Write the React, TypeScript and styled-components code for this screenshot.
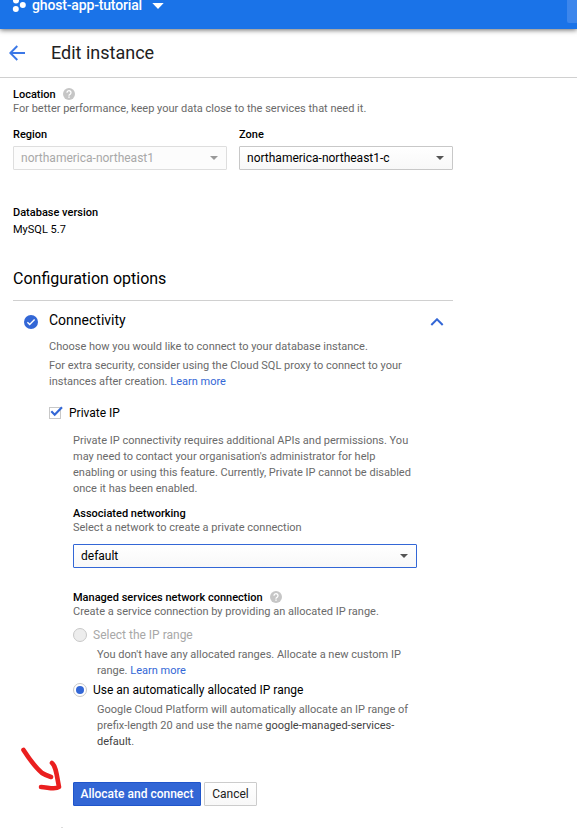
import React from 'react';
import styled, { createGlobalStyle, css } from 'styled-components';

const Global = createGlobalStyle`
  * { box-sizing: border-box; }
  body { margin: 0; background: #fff; font-family: Roboto, sans-serif; overflow: hidden; }
`;

const Page = styled.div`
  position: relative;
  width: 577px;
  height: 828px;
  overflow: hidden;
  background: #fff;
  color: #000;
  font-size: 11px;
  line-height: 16px;
  white-space: nowrap;
`;

const TopBar = styled.header`
  position: relative;
  display: flex;
  align-items: flex-start;
  justify-content: space-between;
  height: 29px;
  padding-left: 12px;
  background: #1a73e8;
  color: #fff;
  box-shadow: 0 1px 5px rgba(0, 0, 0, 0.6);
`;

const Project = styled.div`
  display: flex;
  height: 12px;
  gap: 6px;
  svg { display: block; }
`;

const ProjectName = styled.span`
  width: 114px;
  height: 10px;
  font-size: 14px;
  font-weight: 500;
  letter-spacing: -0.16px;
  line-height: 10px;
`;

const SearchEdge = styled.div`
  width: 10px;
  height: 23px;
  border-radius: 0 0 0 2px;
  background: #3c86ec;
`;

const TitleBar = styled.div`
  display: flex;
  align-items: center;
  gap: 26px;
  height: 49px;
  padding-left: 9px;
  border-bottom: 1px solid #d0d0d0;
`;

const Title = styled.h1`
  margin: 0;
  font-size: 18px;
  font-weight: 400;
  line-height: 24px;
  color: #212121;
`;

const Content = styled.main`
  width: 453px;
  padding: 9px 0 0 13px;
`;

const Line = styled.div<{ $kind?: 'label' | 'muted' | 'plain' }>`
  display: flex;
  align-items: center;
  gap: 7px;
  height: 16px;
  color: ${p => (p.$kind === 'muted' ? '#6a6a6a' : '#000')};
  font-weight: ${p => (p.$kind === 'label' ? 500 : 400)};
  svg { flex: none; margin-bottom: 2px; }
`;

const Text = styled.p<{ $top?: number }>`
  margin: ${p => p.$top ?? 0}px 0 0;
  color: #6a6a6a;
`;

const Link = styled.a`
  color: #3367d6;
`;

const Name = styled.span`
  color: #424242;
`;

const Stack = styled.div<{ $top: number }>`
  margin-top: ${p => p.$top}px;
`;

const Tight = styled.div`
  display: flex;
  flex-direction: column;
  > :last-child { margin-top: -2px; }
`;

const Columns = styled.div`
  display: grid;
  grid-template-columns: 214px 214px;
  gap: 12px;
  margin-top: 10px;
`;

const Select = styled.div<{ $state?: 'disabled' | 'focus' }>`
  display: flex;
  align-items: center;
  justify-content: space-between;
  height: 24px;
  padding: 0 8px 0 7px;
  border: 1px solid #c8c8c8;
  border-radius: 1px;
  background: linear-gradient(#fff, #f8f8f8);
  font-size: 12px;
  color: #000;
  ${p => p.$state === 'disabled' && css`border-color: #dedede; color: #a8a8a8; background: #fcfcfc;`}
  ${p => p.$state === 'focus' && css`border-color: #3367d6;`}
`;

const Heading = styled.h2`
  margin: 29px 0 0;
  height: 34px;
  padding-top: 2px;
  border-bottom: 1px solid #d0d0d0;
  font-size: 16px;
  font-weight: 400;
  line-height: 20px;
`;

const SectionHead = styled.div`
  display: flex;
  align-items: center;
  height: 20px;
  margin-top: 11px;
  padding: 0 9px 0 11px;
  svg { flex: none; }
`;

const SectionTitle = styled.span`
  flex: 1;
  margin-left: 11px;
  padding-bottom: 4px;
  font-size: 14px;
`;

const Body = styled.section`
  padding-left: 36px;
`;

const Nested = styled.div`
  width: 368px;
  padding-left: 24px;
`;

const Option = styled.div<{ $disabled?: boolean }>`
  display: flex;
  align-items: center;
  gap: 6px;
  height: 16px;
  font-size: 12px;
  color: ${p => (p.$disabled ? '#a8a8a8' : '#000')};
`;

const CheckLabel = styled.span`
  padding-top: 2px;
`;

const Radio = styled.span<{ $on?: boolean }>`
  display: flex;
  align-items: center;
  justify-content: center;
  width: 14px;
  height: 14px;
  border: 1px solid #c8c8c8;
  border-radius: 50%;
  background: ${p => (p.$on ? '#fff' : '#ededed')};
  &::after {
    content: '';
    width: 8px;
    height: 8px;
    border-radius: 50%;
    background: ${p => (p.$on ? '#3367d6' : 'transparent')};
  }
`;

const Actions = styled.div`
  display: flex;
  gap: 3px;
  margin-top: 32px;
`;

const Button = styled.button<{ $primary?: boolean }>`
  width: ${p => (p.$primary ? 128 : 53)}px;
  height: 24px;
  padding: 0;
  border: 1px solid ${p => (p.$primary ? '#1f55cb' : '#cccccc')};
  border-radius: 1px;
  background: ${p => (p.$primary ? '#3266d5' : 'linear-gradient(#fff, #f8f8f8)')};
  color: ${p => (p.$primary ? '#fff' : '#212121')};
  font: ${p => (p.$primary ? 500 : 400)} 12px/22px Roboto, sans-serif;
`;

const Marker = styled.svg`
  position: absolute;
  left: 18px;
  top: 742px;
`;

const Speck = styled.span`
  position: absolute;
  left: 61px;
  top: 827px;
  width: 2px;
  height: 1px;
  background: #ddd;
`;

const Help = () => (
  <svg width="12" height="12" viewBox="0 0 12 12">
    <circle cx="6" cy="6" r="6" fill="#c6c6c6" />
    <path d="M4 4.7a2 2 0 1 1 3.2 1.5C6.4 6.8 6 6.9 6 7.7" fill="none" stroke="#fff" strokeWidth="1.3" />
    <rect x="5.3" y="8.5" width="1.4" height="1.3" fill="#fff" />
  </svg>
);

const Caret = ({ color = '#555' }: { color?: string }) => (
  <svg width="8" height="4" viewBox="0 0 8 4"><path d="M0 0h8L4 4z" fill={color} /></svg>
);

export default function App() {
  return (
    <Page>
      <Global />
      <TopBar>
        <Project>
          <svg width="14" height="12" viewBox="0 0 14 12">
            <g fill="#fff"><circle cx="4" cy="0.6" r="3" /><circle cx="10.8" cy="5" r="3" /><circle cx="3.8" cy="9" r="3" /></g>
          </svg>
          <ProjectName>ghost-app-tutorial</ProjectName>
          <svg width="12" height="10" viewBox="0 0 12 10"><path d="M0.3 3h11.4L6 9z" fill="#fff" /></svg>
        </Project>
        <SearchEdge />
      </TopBar>
      <TitleBar>
        <svg width="16" height="16" viewBox="0 0 16 16"><path d="M16 8H1.5M8.3 1L1.3 8l7 7" fill="none" stroke="#3b78e7" strokeWidth="1.9" /></svg>
        <Title>Edit instance</Title>
      </TitleBar>
      <Content>
        <Tight>
          <Line $kind="label">Location <Help /></Line>
          <Line $kind="muted">For better performance, keep your data close to the services that need it.</Line>
        </Tight>
        <Columns>
          <div>
            <Line $kind="label">Region</Line>
            <Stack $top={3}><Select $state="disabled">northamerica-northeast1 <Caret color="#999" /></Select></Stack>
          </div>
          <div>
            <Line $kind="label">Zone</Line>
            <Stack $top={3}><Select>northamerica-northeast1-c <Caret /></Select></Stack>
          </div>
        </Columns>
        <Stack $top={35}>
          <Line $kind="label">Database version</Line>
          <Stack $top={1}><Line>MySQL 5.7</Line></Stack>
        </Stack>
        <Heading>Configuration options</Heading>
        <SectionHead>
          <svg width="14" height="14" viewBox="0 0 14 14">
            <circle cx="7" cy="7" r="7" fill="#3367d6" />
            <path d="M3.4 7.3l2.3 2.3 4.9-5" fill="none" stroke="#fff" strokeWidth="1.4" />
          </svg>
          <SectionTitle>Connectivity</SectionTitle>
          <svg width="14" height="8" viewBox="0 0 14 8"><path d="M1.3 7L7 1.3 12.7 7" fill="none" stroke="#3367d6" strokeWidth="2" /></svg>
        </SectionHead>
        <Body>
          <Text $top={7}>Choose how you would like to connect to your database instance.</Text>
          <Text $top={3}>
            For extra security, consider using the Cloud SQL proxy to connect to your<br />
            instances after creation. <Link>Learn more</Link>
          </Text>
          <Stack $top={14}>
            <Option>
              <svg width="14" height="14" viewBox="0 0 14 14">
                <rect x="0.5" y="2.5" width="11" height="11" fill="#fff" stroke="#c8c8c8" />
                <path d="M2.3 6.3l3.4 3.4L13 2.2" fill="none" stroke="#3367d6" strokeWidth="2.2" />
              </svg>
              <CheckLabel>Private IP</CheckLabel>
            </Option>
          </Stack>
          <Nested>
            <Text $top={13}>
              Private IP connectivity requires additional APIs and permissions. You<br />
              may need to contact your organisation's administrator for help<br />
              enabling or using this feature. Currently, Private IP cannot be disabled<br />
              once it has been enabled.
            </Text>
            <Stack $top={9}>
              <Tight>
                <Line $kind="label">Associated networking</Line>
                <Line $kind="muted">Select a network to create a private connection</Line>
              </Tight>
            </Stack>
            <Stack $top={8}><Select $state="focus">default <Caret /></Select></Stack>
            <Stack $top={22}>
              <Tight>
                <Line $kind="label">Managed services network connection <Help /></Line>
                <Line $kind="muted">Create a service connection by providing an allocated IP range.</Line>
              </Tight>
            </Stack>
            <Stack $top={7}>
              <Option $disabled><Radio />Select the IP range</Option>
              <Nested>
                <Text $top={4}>
                  You don't have any allocated ranges. Allocate a new custom IP<br />
                  range. <Link>Learn more</Link>
                </Text>
              </Nested>
            </Stack>
            <Stack $top={3}>
              <Option><Radio $on />Use an automatically allocated IP range</Option>
              <Nested>
                <Text $top={4}>
                  Google Cloud Platform will automatically allocate an IP range of<br />
                  prefix-length 20 and use the name <Name>google-managed-services-<br />default</Name>.
                </Text>
              </Nested>
            </Stack>
            <Actions>
              <Button $primary>Allocate and connect</Button>
              <Button>Cancel</Button>
            </Actions>
          </Nested>
        </Body>
      </Content>
      <Marker width="46" height="52" viewBox="0 0 46 52">
        <path d="M5.5 8C10 15 17 25 24 31C27 33 30 34 33 35M34 21C38 24 39 35 41 45C37 48 29 45 23 45" fill="none" stroke="#ea1f1f" strokeWidth="4.6" strokeLinecap="round" strokeLinejoin="round" />
      </Marker>
      <Speck />
    </Page>
  );
}
